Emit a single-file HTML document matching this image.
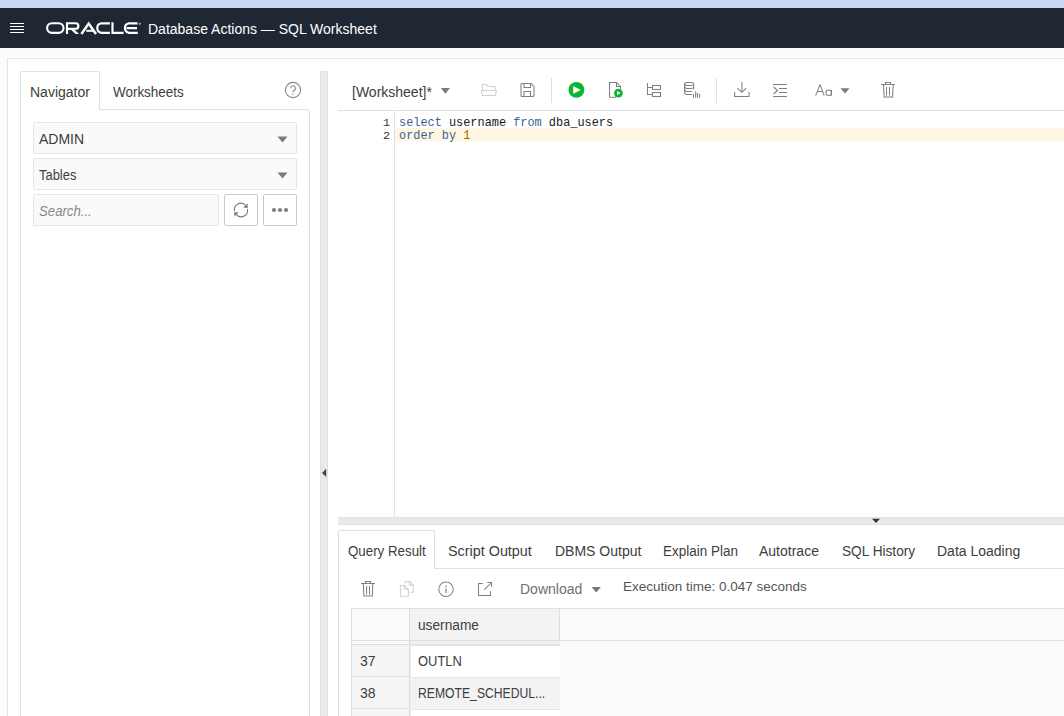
<!DOCTYPE html>
<html><head><meta charset="utf-8">
<style>
*{box-sizing:border-box;margin:0;padding:0}
html,body{width:1064px;height:716px;overflow:hidden;background:#fcfcfc;font-family:"Liberation Sans",sans-serif;color:#3d3d3d}
.a{position:absolute}
.t{position:absolute;white-space:nowrap;font-size:14px;line-height:16px}
svg{position:absolute;overflow:visible}
</style></head><body>
<!-- top strip -->
<div class="a" style="left:0;top:0;width:1064px;height:8px;background:#c8d9f1"></div>
<!-- header -->
<div class="a" style="left:0;top:8px;width:1064px;height:40px;background:#1f2733"></div>
<div class="a" style="left:10px;top:23px;width:14px;height:1px;background:#fff"></div>
<div class="a" style="left:10px;top:26px;width:14px;height:1px;background:#fff"></div>
<div class="a" style="left:10px;top:29px;width:14px;height:1px;background:#fff"></div>
<div class="a" style="left:10px;top:32px;width:14px;height:1px;background:#fff"></div>
<svg width="1064" height="50" style="left:0;top:0" viewBox="0 0 1064 50">
<g fill="none" stroke="#fff" stroke-width="2.15">
<rect x="47.1" y="23.2" width="16.4" height="9.7" rx="4.85"/>
<path d="M67,34 V23.2 H75.6 A2.8,2.8 0 0 1 75.6,28.8 H67.5"/>
<path d="M81.4,34 L88.7,23.6 L96,34" stroke-width="2.5"/>
<path d="M109.9,23.3 H101.4 A4.85,4.85 0 0 0 101.4,32.9 H109.9"/>
<path d="M112.5,22.2 V32.9 H123.6"/>
<path d="M137.5,23.3 H129.1 A4.85,4.85 0 0 0 129.1,32.9 H137.8 M126.6,28.1 H137"/>
</g>
<g fill="#fff">
<polygon points="69.2,28 72.6,28 79.2,34 75.6,34"/>
<rect x="86.3" y="29.8" width="8" height="2"/>
<circle cx="139.8" cy="23.8" r="1.1" fill="#aaa"/>
</g>
</svg>
<div class="t" style="left:148px;top:21px;color:#fff;font-size:14px">Database Actions — SQL Worksheet</div>

<!-- outer panel -->
<div class="a" style="left:7px;top:58px;width:1100px;height:700px;background:#fff;border:1px solid #e3e3e3"></div>

<!-- navigator tabs -->
<div class="a" style="left:20px;top:71px;width:80px;height:39px;border:1px solid #dfe1e1;border-bottom:none;background:#fff;border-radius:2px 2px 0 0"></div>
<div class="a" style="left:20px;top:109px;width:290px;height:620px;border:1px solid #dfe1e1;border-radius:0 3px 0 0"></div>
<div class="a" style="left:21px;top:109px;width:78px;height:1px;background:#fff"></div>
<div class="t" style="left:30px;top:84px">Navigator</div>
<div class="t" style="left:113px;top:84px;transform:scaleX(0.96);transform-origin:0 0">Worksheets</div>

<!-- splitter vertical -->
<div class="a" style="left:320px;top:71px;width:8px;height:660px;background:#e9e9e9;border-left:1px solid #e2e2e2;border-right:1px solid #e2e2e2"></div>

<!-- selects -->
<div class="a" style="left:33px;top:122px;width:264px;height:32px;background:#fafafa;border:1px solid #e5e5e5;border-radius:2px"></div>
<div class="t" style="left:39px;top:131px">ADMIN</div>
<div class="a" style="left:33px;top:158px;width:264px;height:32px;background:#fafafa;border:1px solid #e5e5e5;border-radius:2px"></div>
<div class="t" style="left:39px;top:167px;transform:scaleX(0.923);transform-origin:0 0">Tables</div>
<div class="a" style="left:33px;top:194px;width:186px;height:32px;background:#fafafa;border:1px solid #e5e5e5;border-radius:2px"></div>
<div class="t" style="left:39px;top:203px;font-style:italic;color:#888;transform:scaleX(0.942);transform-origin:0 0">Search...</div>
<div class="a" style="left:224px;top:194px;width:34px;height:32px;background:#fff;border:1px solid #c9c9c9;border-radius:2px"></div>
<div class="a" style="left:263px;top:194px;width:34px;height:32px;background:#fff;border:1px solid #c9c9c9;border-radius:2px"></div>


<!-- help icon -->
<svg width="20" height="20" style="left:283px;top:80px" viewBox="0 0 20 20">
<circle cx="10" cy="10" r="7.6" fill="none" stroke="#8a8a8a" stroke-width="1.1"/>
<path d="M7.6,8.2 A2.4,2.4 0 1 1 10.9,10.4 Q10,10.9 10,12 V12.6" fill="none" stroke="#8a8a8a" stroke-width="1.1"/>
<circle cx="10" cy="14.4" r="0.7" fill="#8a8a8a"/>
</svg>
<!-- select triangles -->
<svg width="12" height="8" style="left:277px;top:136px" viewBox="0 0 12 8"><polygon points="0.5,0.5 10.5,0.5 5.5,6.5" fill="#7a7a7a"/></svg>
<svg width="12" height="8" style="left:277px;top:172px" viewBox="0 0 12 8"><polygon points="0.5,0.5 10.5,0.5 5.5,6.5" fill="#7a7a7a"/></svg>
<!-- refresh -->
<svg width="20" height="20" style="left:231px;top:200px" viewBox="0 0 20 20">
<g fill="none" stroke="#7a7a7a" stroke-width="1.1">
<path d="M3.6,11.2 A6.4,6.4 0 0 1 14.6,5.4"/>
<path d="M16.4,8.8 A6.4,6.4 0 0 1 5.4,14.6"/>
</g>
<polygon points="16.6,3.6 16.6,8 12.3,7.6" fill="#7a7a7a"/>
<polygon points="3.4,16.4 3.4,12 7.7,12.4" fill="#7a7a7a"/>
</svg>
<!-- more -->
<svg width="20" height="6" style="left:270px;top:207px" viewBox="0 0 20 6">
<circle cx="4" cy="3" r="2.1" fill="#7c7c7c"/><circle cx="10" cy="3" r="2.1" fill="#7c7c7c"/><circle cx="16" cy="3" r="2.1" fill="#7c7c7c"/>
</svg>
<!-- worksheet dropdown -->
<svg width="12" height="8" style="left:440px;top:87px" viewBox="0 0 12 8"><polygon points="0.9,1.1 9.9,1.1 5.4,6.7" fill="#7a7a7a"/></svg>
<!-- worksheet toolbar -->
<div class="t" style="left:352px;top:84px">[Worksheet]*</div>
<div class="a" style="left:338px;top:110px;width:730px;height:1px;background:#e0e0e0"></div>
<div class="a" style="left:551px;top:78px;width:1px;height:25px;background:#e0e0e0"></div>
<div class="a" style="left:716px;top:78px;width:1px;height:25px;background:#e0e0e0"></div>


<!-- toolbar icons -->
<svg width="1064" height="120" style="left:0;top:0" viewBox="0 0 1064 120">
<g fill="none" stroke-width="1.05">
<!-- folder -->
<path d="M482.5,90 V84.5 H486.4 L488,86.5 H495.2 V90" stroke="#d0d0d0"/>
<path d="M481.2,90.4 H496.4 L495.2,95.4 H482.5 Z" stroke="#d0d0d0"/>
<!-- save -->
<path d="M521,84.5 Q521,83.5 522,83.5 H531 L534,86.5 V95.5 Q534,96.5 533,96.5 H522 Q521,96.5 521,95.5 Z" stroke="#808080"/>
<path d="M524,83.5 V87.5 H530.5 V84" stroke="#808080"/>
<path d="M524,96 V91.5 H530.5 V96" stroke="#808080"/>
<!-- script doc -->
<path d="M616,97.3 H609.5 V82.5 H616.5 L620.5,86.5 V89" stroke="#808080"/>
<path d="M616.5,82.5 V86.5 H620.5" stroke="#808080"/>
<!-- explain plan -->
<path d="M647.5,83 V94.5 H652.5 M647.5,87.5 H652.5" stroke="#808080"/>
<rect x="652.5" y="85.5" width="8" height="4" stroke="#808080"/>
<rect x="652.5" y="92.5" width="8" height="4" stroke="#808080"/>
<!-- db -->
<path d="M693.7,89.5 V84 Q693.7,82.4 691.5,82.4 H686.8 Q684.6,82.4 684.6,84 V92.5 Q684.6,94.4 686.8,94.4 H692" stroke="#808080"/>
<path d="M684.8,84 Q685.2,85.4 686.8,85.4 H691.5 Q693.3,85.4 693.6,84 M684.8,87 Q685.2,88.4 686.8,88.4 H691.5 Q693.3,88.4 693.6,87 M684.8,90 Q685.2,91.4 686.8,91.4 H692" stroke="#808080"/>
<path d="M693.5,97.8 V94 M695.7,97.8 V91.2 M697.6,97.8 V93.1 M699.7,97.8 V94.1" stroke="#808080"/>
<!-- download -->
<path d="M741.9,82 V92 M737.3,88.2 L741.9,92.4 L746.2,88.2 M734.6,92 V96.4 H749 V92" stroke="#808080"/>
<!-- format -->
<path d="M773,84.5 H787 M779,88.5 H787 M779,92.5 H787 M773,96.5 H787 M773.5,87 L777.5,90.5 L773.5,94" stroke="#808080"/>
<!-- trash -->
<path d="M881,84.5 H895 M885.5,84.5 V82.5 H890.5 V84.5 M883.5,84.5 L884.1,97 H892.6 L893.2,84.5 M886.5,87 V95.5 M889.5,87 V95.5" stroke="#808080"/>
</g>
<!-- play -->
<circle cx="576.4" cy="89.9" r="7.9" fill="#0db42f"/>
<polygon points="573.2,86 573.2,93.8 580.8,89.9" fill="#fff"/>
<!-- script play -->
<circle cx="618.4" cy="93.1" r="4.4" fill="#0db42f"/>
<polygon points="617,91 617,95.2 620.6,93.1" fill="#fff"/>
<!-- Aa -->
<path d="M815.6,95.6 L820.1,84.6 L824.2,95.6 M817.1,91.4 H822.8" fill="none" stroke="#808080" stroke-width="1.05" stroke-linejoin="round"/>
<circle cx="828.7" cy="92.8" r="2.75" fill="none" stroke="#808080" stroke-width="1.05"/>
<path d="M831.4,90 V95.7" fill="none" stroke="#808080" stroke-width="1.05"/>
<polygon points="840.5,88.3 849.5,88.3 845,93.6" fill="#7a7a7a"/>
</svg>
<!-- editor -->
<div class="a" style="left:394px;top:111px;width:1px;height:406px;background:#dde3ea"></div>
<div class="a" style="left:395px;top:128px;width:680px;height:13px;background:#fff7e1"></div>


<div class="a" style="left:360px;top:117px;width:30px;font-family:'Liberation Mono',monospace;font-size:11.8px;line-height:13px;color:#333;text-align:right">1<br>2</div>
<div class="a" style="left:399px;top:117px;font-family:'Liberation Mono',monospace;font-size:11.9px;line-height:13px;color:#1a1a1a;white-space:pre"><span style="color:#3d5f99">select</span> username <span style="color:#3d5f99">from</span> dba_users
<span style="color:#3d5f99">order by</span> <span style="color:#a86800">1</span></div>
<!-- horizontal splitter -->
<div class="a" style="left:338px;top:517px;width:730px;height:8px;background:#e9e9e9;border-top:1px solid #e2e2e2;border-bottom:1px solid #e2e2e2"></div>

<!-- results tabs -->
<div class="a" style="left:338px;top:530px;width:97px;height:38px;border:1px solid #dfe1e1;border-bottom:none;background:#fff;border-radius:2px 2px 0 0"></div>
<div class="a" style="left:338px;top:568px;width:730px;height:1px;background:#dfe1e1"></div>
<div class="a" style="left:339px;top:568px;width:95px;height:1px;background:#fff"></div>
<div class="a" style="left:338px;top:569px;width:1px;height:200px;background:#dfe1e1"></div>

<svg width="1064" height="716" style="left:0;top:0" viewBox="0 0 1064 716">
<polygon points="872,518.8 880,518.8 876,523" fill="#333"/>
<polygon points="326.2,468.8 326.2,477 322,472.9" fill="#444"/>
</svg>
<!-- results tab texts -->
<div class="t" style="left:348px;top:543px;transform:scaleX(0.951);transform-origin:0 0">Query Result</div>
<div class="t" style="left:448px;top:543px;transform:scaleX(1.026);transform-origin:0 0">Script Output</div>
<div class="t" style="left:555px;top:543px">DBMS Output</div>
<div class="t" style="left:663px;top:543px;transform:scaleX(0.962);transform-origin:0 0">Explain Plan</div>
<div class="t" style="left:759px;top:543px">Autotrace</div>
<div class="t" style="left:842px;top:543px;transform:scaleX(0.976);transform-origin:0 0">SQL History</div>
<div class="t" style="left:937px;top:543px">Data Loading</div>

<!-- results toolbar -->
<svg width="1064" height="716" style="left:0;top:0" viewBox="0 0 1064 716">
<g fill="none" stroke-width="1.05">
<path d="M361,583.5 H375 M365.5,583.5 V581.5 H370.5 V583.5 M363.3,583.5 L363.9,596 H372.3 L372.8,583.5 M366.6,586 V594.6 M369.5,586 V594.6" stroke="#808080"/>
<path d="M405.2,583.8 V581.5 H409.8 L413.3,585 V592.3 H409.2 M409.4,581.5 V585.1 H413.3" stroke="#d2d2d2"/>
<path d="M400.4,596.2 V585.5 H404.5 L408.4,589.3 V596.2 Z M404.2,585.5 V589.3 H408.4" stroke="#d2d2d2"/>
<circle cx="446" cy="589.2" r="7.2" stroke="#808080"/>
<path d="M446,588.5 V593" stroke="#808080" stroke-width="1.3"/>
<path d="M487.3,582.5 H491.5 V586.7 M491.5,582.5 L484.3,589.7 M482.8,583.5 H478.5 V595.5 H490.5 V591.3" stroke="#808080"/>
</g>
<circle cx="446" cy="586.4" r="0.8" fill="#808080"/>
<polygon points="591.6,587 600.9,587 596.2,592.6" fill="#7a7a7a"/>
</svg>
<div class="t" style="left:520px;top:581px;color:#707070">Download</div>
<div class="t" style="left:623px;top:579px;color:#555;font-size:13.5px">Execution time: 0.047 seconds</div>

<!-- grid -->
<div class="a" style="left:351px;top:608px;width:720px;height:110px;background:#fbfbfb;border-top:1px solid #dfe1e1;border-left:1px solid #dfe1e1"></div>
<div class="a" style="left:351px;top:640px;width:720px;height:1px;background:#dfe1e1"></div>
<!-- rownum col -->
<div class="a" style="left:352px;top:641px;width:57px;height:3px;background:#fafafa"></div>
<div class="a" style="left:352px;top:644px;width:57px;height:1px;background:#dfe1e1"></div>
<div class="a" style="left:352px;top:645px;width:57px;height:31px;background:#f5f5f5"></div>
<div class="a" style="left:352px;top:676px;width:57px;height:1px;background:#dfe1e1"></div>
<div class="a" style="left:352px;top:677px;width:57px;height:31px;background:#f5f5f5"></div>
<div class="a" style="left:352px;top:708px;width:57px;height:1px;background:#dfe1e1"></div>
<div class="a" style="left:352px;top:709px;width:57px;height:10px;background:#f5f5f5"></div>
<div class="a" style="left:409px;top:608px;width:1px;height:110px;background:#dcdcdc"></div>
<div class="a" style="left:410px;top:641px;width:1px;height:80px;background:#ececec"></div>
<!-- username col -->
<div class="a" style="left:410px;top:609px;width:149px;height:31px;background:#f3f3f3"></div>
<div class="a" style="left:559px;top:609px;width:1px;height:31px;background:#dcdcdc"></div>
<div class="a" style="left:411px;top:641px;width:149px;height:3px;background:#f0f0f0"></div>
<div class="a" style="left:411px;top:644px;width:149px;height:2px;background:#e3e3e3"></div>
<div class="a" style="left:411px;top:646px;width:149px;height:31px;background:#fff"></div>
<div class="a" style="left:411px;top:677px;width:149px;height:1px;background:#e6e6e6"></div>
<div class="a" style="left:411px;top:678px;width:149px;height:31px;background:#f3f3f3"></div>
<div class="a" style="left:411px;top:709px;width:149px;height:1px;background:#e6e6e6"></div>
<div class="a" style="left:411px;top:710px;width:149px;height:10px;background:#fff"></div>
<div class="t" style="left:418px;top:617px;transform:scaleX(0.979);transform-origin:0 0">username</div>
<div class="t" style="left:360px;top:653px">37</div>
<div class="t" style="left:418px;top:653px;transform:scaleX(0.923);transform-origin:0 0">OUTLN</div>
<div class="t" style="left:360px;top:685px">38</div>
<div class="t" style="left:418px;top:685px;transform:scaleX(0.87);transform-origin:0 0">REMOTE_SCHEDUL...</div>
</body></html>
